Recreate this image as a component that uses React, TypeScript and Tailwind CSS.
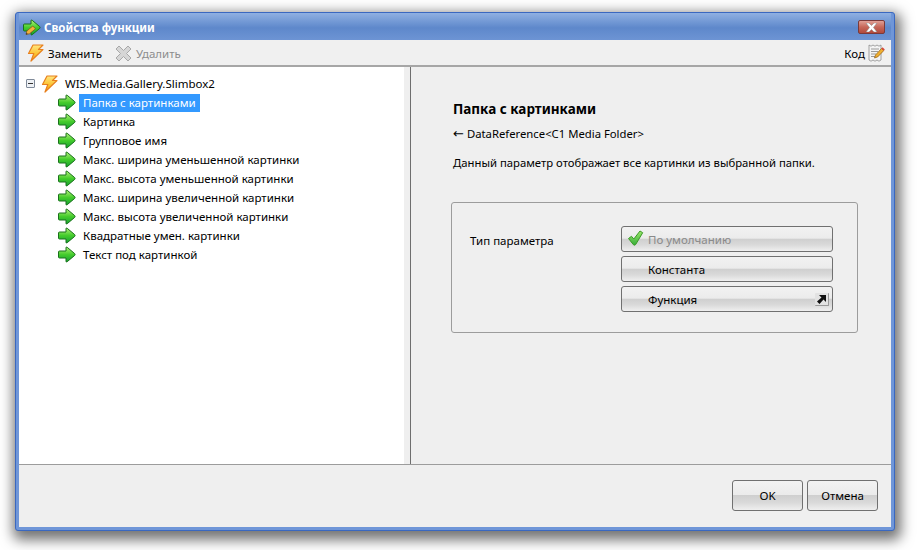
import React from "react";

const Arrow = ({ pencil = false }: { pencil?: boolean }) => (
  <svg width="18" height="17" viewBox="0 0 18 17" className="shrink-0">
    <defs>
      <linearGradient id="ga" x1="0" y1="0" x2="0" y2="1">
        <stop offset="0" stopColor="#b4f07a" />
        <stop offset="0.5" stopColor="#45cc2c" />
        <stop offset="1" stopColor="#12a030" />
      </linearGradient>
    </defs>
    <path d="M1.500 5h6.500V1.800q0-1.400 1.200-.5l7.500 6.300q.8.900 0 1.800l-7.500 6.300q-1.200.9-1.200-.5V12H1.500q-1 0-1-1V6q0-1 1-1z" fill="url(#ga)" stroke="#1a701c" strokeWidth="1" strokeLinejoin="round" />
    {pencil && (
      <>
        <path d="M3 15.500l.8-3.500 6-5 2.700 2.800-6 5z" fill="#f2b13a" stroke="#7a4f14" strokeWidth="0.7" />
        <path d="M3 15.500l.5-1.700 1.300 1.300z" fill="#333" />
      </>
    )}
  </svg>
);

const Bolt = ({ size = 17 }: { size?: number }) => (
  <svg width={size} height={size + 1} viewBox="0 0 17 18" className="shrink-0">
    <defs>
      <linearGradient id="gb" x1="0" y1="0" x2="0" y2="1">
        <stop offset="0" stopColor="#ffe680" />
        <stop offset="0.6" stopColor="#fbbf2a" />
        <stop offset="1" stopColor="#f39a1c" />
      </linearGradient>
    </defs>
    <path d="M6 1h10l-4.500 4.500H16L4 17l2.800-7.500H1.500z" fill="url(#gb)" stroke="#e8801e" strokeWidth="1.200" strokeLinejoin="round" />
  </svg>
);

const GrayX = () => (
  <svg width="17" height="17" viewBox="0 0 17 17" className="shrink-0">
    <path d="M1 4l3-3 4.500 4.500L13 1l3 3-4.500 4.500L16 13l-3 3-4.500-4.500L4 16l-3-3 4.500-4.500z" fill="#d6d6d6" stroke="#a8a8a8" strokeWidth="1" strokeLinejoin="round" />
  </svg>
);

const CodeIcon = () => (
  <svg width="17" height="18" viewBox="0 0 17 18" className="shrink-0">
    <path d="M1 1l2 1.200L5 1l2 1.200L9 1l2 1.200L13 1v15l-2 1.200L9 16l-2 1.200L5 16l-2 1.200L1 16z" fill="#f4f4f4" stroke="#8d8d8d" strokeWidth="0.8" />
    <path d="M3 5h8M3 7.500h7M3 10h5M3 12.500h4" stroke="#9a9a9a" strokeWidth="1" />
    <path d="M6.500 14l1-3 6-6.500 2.200 2.200-6 6.200z" fill="#f0b030" stroke="#8c5a14" strokeWidth="0.7" />
    <path d="M13.500 4.500l2.200 2.200 1.100-1.200-2.200-2.200z" fill="#d9453a" />
  </svg>
);

const Check = () => (
  <svg width="17" height="16" viewBox="0 0 17 16" className="shrink-0">
    <defs>
      <linearGradient id="gc" x1="0" y1="0" x2="0" y2="1">
        <stop offset="0" stopColor="#9be86a" />
        <stop offset="1" stopColor="#36ad3a" />
      </linearGradient>
    </defs>
    <path d="M1.500 8.500l3-2.200 2.300 2.700 6.200-8 2.700 1.700-7 11.800q-1 1.200-2.300.2z" fill="url(#gc)" stroke="#3c9a28" strokeWidth="1" strokeLinejoin="round" />
  </svg>
);

const params = [
  "Папка с картинками",
  "Картинка",
  "Групповое имя",
  "Макс. ширина уменьшенной картинки",
  "Макс. высота уменьшенной картинки",
  "Макс. ширина увеличенной картинки",
  "Макс. высота увеличенной картинки",
  "Квадратные умен. картинки",
  "Текст под картинкой",
];

const btnBg = "bg-[linear-gradient(#f2f2f2_0%,#ebebeb_47%,#cfcfcf_50%,#dadada_75%,#efefef_100%)]";

const OptionButton = ({ label, disabled, left, right }: { label: string; disabled?: boolean; left?: React.ReactNode; right?: React.ReactNode }) => (
  <div className={`h-[26px] w-[212px] rounded-[3px] border border-[#707070] flex items-center relative pl-[26px] ${btnBg} ${disabled ? "text-[#8a8a8a]" : "text-black"}`}>
    {left && <span className="absolute left-[5px] top-[3px]">{left}</span>}
    <span>{label}</span>
    {right && <span className="absolute right-[3px] top-[6px]">{right}</span>}
  </div>
);

const DialogButton = ({ label }: { label: string }) => (
  <div className={`h-[31px] w-[71px] rounded-[3px] border border-[#707070] flex items-center justify-center text-black ${btnBg}`}>{label}</div>
);

export default function App() {
  return (
    <div className="w-[922px] h-[550px] bg-white pt-[12px] pl-[15px] overflow-hidden text-[11.5px] leading-[15px] font-['Noto_Sans',sans-serif]">
      <div className="w-[880px] h-[519px] flex flex-col rounded-[3px] border border-[#3a68c0] bg-[#6f96d8] shadow-[2px_5px_13px_4px_rgba(0,0,0,0.55)] px-[3px] pb-[3px]">
        <div className="h-[27px] shrink-0 flex items-center pl-[4px] pr-[6px] pt-[1px] bg-[linear-gradient(#8fb0e2,#5e88cb_55%,#6d94d4)]">
          <Arrow pencil />
          <span className="ml-[3px] text-white font-bold text-[11.5px]">Свойства функции</span>
          <div className="ml-auto h-[14px] w-[27px] rounded-[2px] border border-[#7a3a3a] flex items-center justify-center bg-[linear-gradient(#e0a096,#c7685a_50%,#b24a3c)]">
            <svg width="13" height="9" viewBox="0 0 13 9">
              <path d="M1 0h3l2.500 2.500L9 0h3L8.500 4.500 12 9H9L6.500 6.500 4 9H1l3.500-4.500z" fill="#fff" stroke="#7c7c7c" strokeWidth="0.5" />
            </svg>
          </div>
        </div>
        <div className="h-[27px] shrink-0 flex items-center bg-[#f0f0f0] border-b-2 border-[#a6a6a6] pl-[8px] pr-[6px] pt-[1px] text-black">
          <Bolt />
          <span className="ml-[4px]">Заменить</span>
          <span className="ml-[13px]"><GrayX /></span>
          <span className="ml-[4px] text-[#8d8d8d]">Удалить</span>
          <span className="ml-auto mr-[3px]">Код</span>
          <CodeIcon />
        </div>
        <div className="flex-1 flex min-h-0">
          <div className="w-[385px] bg-white pt-[7px] pl-[5px] text-black">
            <div className="h-[19px] flex items-center">
              <span className="w-[9px] h-[9px] ml-[2px] border border-[#7f8a99] rounded-[1px] flex items-center justify-center bg-[#eef1f5]">
                <span className="w-[5px] h-[1px] bg-[#333]" />
              </span>
              <span className="ml-[6px]"><Bolt /></span>
              <span className="ml-[7px]">WIS.Media.Gallery.Slimbox2</span>
            </div>
            {params.map((p, i) => (
              <div key={p} className="h-[19px] flex items-center pl-[34px]">
                <Arrow />
                <span className={`ml-[3px] h-[18px] flex items-center px-[4px] ${i === 0 ? "bg-[#3399ff] text-white" : ""}`}>{p}</span>
              </div>
            ))}
          </div>
          <div className="w-[6px] bg-[#efefef]" />
          <div className="w-[1px] bg-[#6e6e6e]" />
          <div className="flex-1 bg-[#efefef] pl-[40px] pt-[34px] text-black">
            <div className="ml-[2px] text-[13.5px] font-bold leading-[16px]">Папка с картинками</div>
            <div className="ml-[2px] mt-[9px] text-[11.3px] flex items-center">
              <span className="text-[13px] leading-[15px] mr-[3px] font-['DejaVu_Sans',sans-serif]">←</span>
              <span>DataReference&lt;C1 Media Folder&gt;</span>
            </div>
            <div className="ml-[2px] mt-[14px] text-[11.3px]">Данный параметр отображает все картинки из выбранной папки.</div>
            <div className="mt-[32px] w-[407px] h-[131px] border border-[#9c9c9c] rounded-[3px] flex pt-[23px] pl-[18px]">
              <div className="w-[151px] pt-[7px]">Тип параметра</div>
              <div className="flex flex-col gap-[4px]">
                <OptionButton label="По умолчанию" disabled left={<Check />} />
                <OptionButton label="Константа" />
                <OptionButton
                  label="Функция"
                  right={
                    <span className="w-[14px] h-[13px] flex items-center justify-center rounded-[1px] bg-[#e2e2e2] border-b border-r border-[#9a9a9a]">
                      <svg width="9" height="9" viewBox="0 0 9 9"><path d="M2 0h7v7L6.500 4.500 2.500 9 0 6.500 4.500 2.500z" fill="#111" /></svg>
                    </span>
                  }
                />
              </div>
            </div>
          </div>
        </div>
        <div className="h-[63px] shrink-0 bg-[#efefef] border-t border-[#9c9c9c] flex justify-end gap-[4px] pt-[15px] pr-[13px]">
          <DialogButton label="OK" />
          <DialogButton label="Отмена" />
        </div>
      </div>
    </div>
  );
}
